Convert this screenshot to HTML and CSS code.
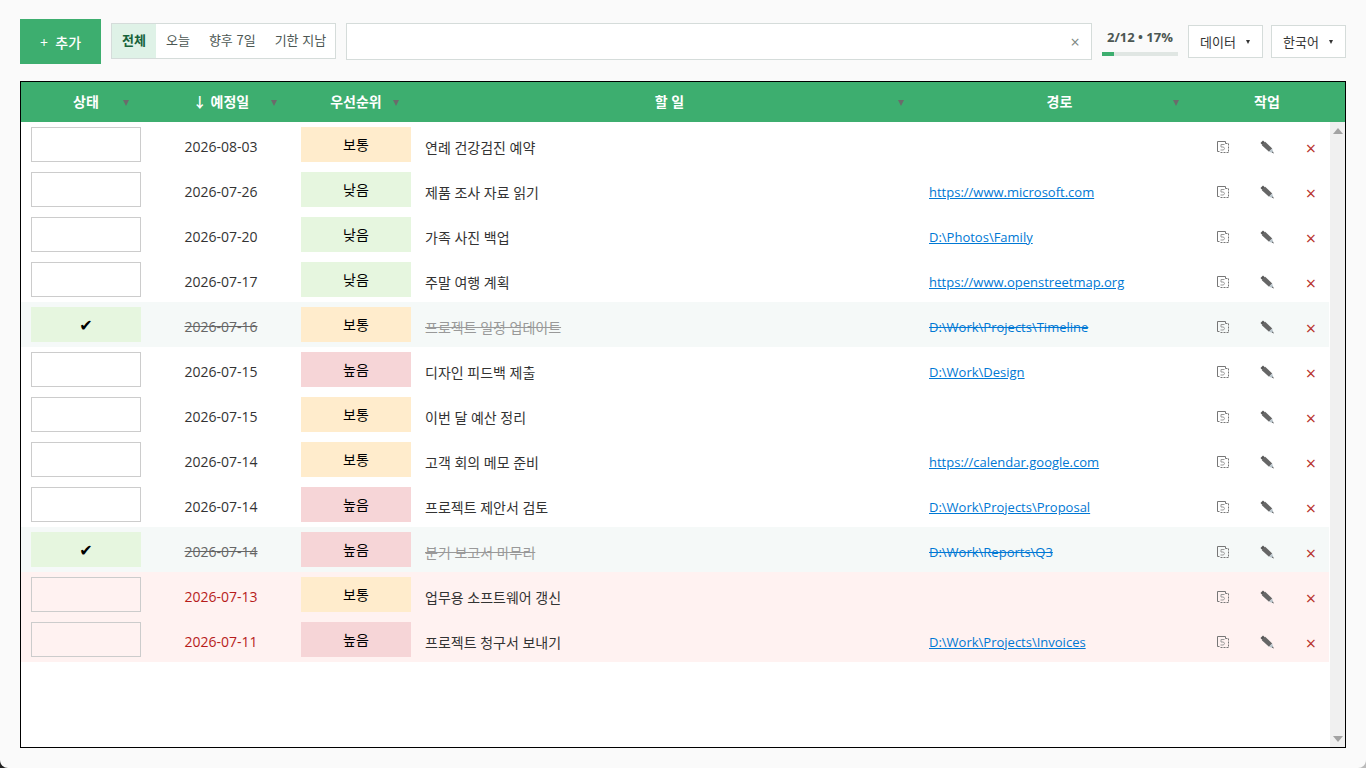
FILE: index.html
```html
<!DOCTYPE html>
<html lang="ko">
<head>
    <meta charset="UTF-8">
    <meta name="viewport" content="width=device-width, initial-scale=1.0">
    <title>할 일</title>
    <link rel="stylesheet" href="styles.css">
</head>
<body>
    <div class="app">
        <header class="toolbar">
            <button class="btn-add" type="button">+&nbsp; 추가</button>

            <div class="filters">
                <button class="filter active" type="button">전체</button>
                <button class="filter" type="button">오늘</button>
                <button class="filter" type="button">향후 7일</button>
                <button class="filter" type="button">기한 지남</button>
            </div>

            <div class="search">
                <input type="text" id="search" aria-label="검색">
                <button class="search-clear" type="button" aria-label="지우기">×</button>
            </div>

            <div class="progress">
                <div class="progress-text">2/12 • 17%</div>
                <div class="progress-track"><div class="progress-fill" style="width: 16%"></div></div>
            </div>

            <div class="menus">
                <button class="menu" type="button">데이터 <span class="caret"></span></button>
                <label class="menu">
                    <select id="language" aria-label="언어">
                        <option>한국어</option>
                    </select>
                    <span class="caret"></span>
                </label>
            </div>
        </header>

        <main class="frame">
            <table class="tasks">
                <thead>
                    <tr>
                        <th>상태<button class="th-filter" type="button" aria-label="상태 필터"></button></th>
                        <th class="th-date">↓ 예정일<button class="th-filter" type="button" aria-label="예정일 필터"></button></th>
                        <th>우선순위<button class="th-filter" type="button" aria-label="우선순위 필터"></button></th>
                        <th class="th-task">할 일<button class="th-filter" type="button" aria-label="할 일 필터"></button></th>
                        <th>경로<button class="th-filter" type="button" aria-label="경로 필터"></button></th>
                        <th class="th-actions">작업</th>
                    </tr>
                </thead>
                <tbody id="taskRows"></tbody>
            </table>
            <div class="scrollbar">
                <span class="scroll-up"></span>
                <span class="scroll-down"></span>
            </div>
        </main>
    </div>

    <script src="app.js"></script>
</body>
</html>
```
FILE: styles.css
```css
* {
    margin: 0;
    padding: 0;
    box-sizing: border-box;
}

html {
    background: linear-gradient(90deg, #222222, #bbbbbb);
}

body,
button,
input,
select {
    font-family: 'Open Sans', 'Noto Sans CJK KR', sans-serif;
    font-size: 14px;
    color: #333333;
}

button {
    border: none;
    background: none;
    cursor: pointer;
}

.app {
    display: flex;
    flex-direction: column;
    gap: 17px;
    min-height: 100vh;
    padding: 19px 20px 20px;
    background: #fafafa;
    border-radius: 0 0 8px 8px;
}

/* Toolbar */
.toolbar {
    display: flex;
    align-items: center;
    gap: 10px;
    height: 45px;
}

.btn-add {
    height: 45px;
    padding: 0 20px;
    background: #3dae6f;
    color: #ffffff;
    font-weight: 500;
}

.filters {
    display: flex;
    height: 36px;
    margin-bottom: 1px;
    border: 1px solid #d5dcda;
    background: #ffffff;
}

.filter {
    padding: 0 9px 3px 10px;
    font-family: 'Noto Sans CJK KR', sans-serif;
    font-size: 13px;
    color: #4c5753;
}

.filter.active {
    padding-right: 10px;
    background: #dff2e7;
    color: #17633b;
    font-weight: 700;
}

.search {
    display: flex;
    flex: 1;
    height: 37px;
    border: 1px solid #d5dcda;
    background: #ffffff;
}

.search input {
    flex: 1;
    min-width: 0;
    padding: 0 10px;
    border: none;
    outline: none;
    background: none;
}

.search-clear {
    width: 32px;
    font-size: 16px;
    color: #7d8682;
}

.progress {
    width: 76px;
}

.progress-text {
    font-size: 13px;
    line-height: 18px;
    font-weight: 700;
    text-align: center;
    white-space: nowrap;
    color: #4c5753;
}

.progress-track {
    height: 4px;
    margin-top: 6px;
    background: #e0e6e3;
}

.progress-fill {
    height: 4px;
    background: #3dae6f;
}

.menus {
    display: flex;
    gap: 8px;
}

.menu {
    display: flex;
    align-items: center;
    justify-content: space-between;
    width: 75px;
    height: 33px;
    padding: 0 12px 0 11px;
    border: 1px solid #d5dcda;
    background: #ffffff;
    font-size: 13px;
}

.menu select {
    appearance: none;
    border: none;
    background: none;
    font-size: 13px;
}

.caret {
    border: 2px solid transparent;
    border-top: 4px solid #333333;
    border-bottom: none;
}

/* Task table */
.frame {
    position: relative;
    flex: 1;
    border: 1px solid #000000;
    background: #ffffff;
}

.tasks,
.tasks thead,
.tasks tbody {
    display: block;
}

.tasks tr {
    display: grid;
    grid-template-columns: 130px 140px 130px 497fr 283fr 128px;
    align-items: center;
    height: 45px;
    margin-right: 16px;
}

.tasks thead tr {
    height: 40px;
    margin-right: 0;
    padding-right: 16px;
    background: #3dae6f;
}

.tasks th {
    position: relative;
    line-height: 40px;
    font-weight: 700;
    color: #ffffff;
}

.th-filter {
    position: absolute;
    top: 18px;
    right: 22px;
    border: 3px solid transparent;
    border-top: 6px solid #6b6b6b;
    border-bottom: none;
}

.th-date .th-filter,
.th-task .th-filter {
    right: 14px;
}

.tasks .th-actions {
    padding-left: 4px;
}

.status,
.priority {
    display: block;
    appearance: none;
    width: 110px;
    height: 35px;
    margin: 0 auto;
    border: 1px solid #cccccc;
    text-align: center;
    line-height: 35px;
    color: #000000;
}

.status:checked {
    border: none;
    background: #e6f6df;
}

.status:checked::before {
    content: '✔';
    font-family: 'DejaVu Sans', sans-serif;
    font-size: 16px;
    line-height: 38px;
}

.priority {
    border: none;
    border-radius: 0;
    text-align-last: center;
}

.priority.high { background: #f6d5d7; }
.priority.medium { background: #ffeccc; }
.priority.low { background: #e6f6df; }

.date,
.task,
.path,
.actions {
    padding-top: 4px;
}

.date {
    text-align: center;
}

.task {
    padding-left: 4px;
}

.path {
    padding-left: 11px;
    font-size: 13px;
}

.path a {
    color: #0078d4;
}

.actions {
    display: flex;
    gap: 12px;
    padding-left: 6px;
}

.actions button {
    width: 32px;
    height: 32px;
    line-height: 32px;
}

.actions svg {
    display: block;
    margin: 0 auto;
}

.actions .delete {
    padding-top: 1px;
    font-size: 18px;
    color: #b8322a;
}

.done {
    background: #f5f9f8;
}

.done .date {
    color: #666666;
    text-decoration: line-through;
}

.done .task {
    color: #999999;
    text-decoration: line-through;
}

.done .path a {
    text-decoration: line-through;
}

.overdue {
    background: #fff2f1;
}

.overdue .date {
    color: #b71c1c;
}

/* Scrollbar */
.scrollbar {
    position: absolute;
    top: 40px;
    right: 0;
    bottom: 0;
    display: flex;
    flex-direction: column;
    justify-content: space-between;
    align-items: center;
    width: 15px;
    padding: 6px 0 5px;
    background: #f0f0f0;
}

.scroll-up,
.scroll-down {
    border: 5px solid transparent;
}

.scroll-up {
    border-top: none;
    border-bottom: 6px solid #a3a3a3;
}

.scroll-down {
    border-top: 6px solid #a3a3a3;
    border-bottom: none;
}
```
FILE: app.js
```js
const tasks = [
    { date: '2026-08-03', priority: 'medium', text: '연례 건강검진 예약' },
    { date: '2026-07-26', priority: 'low', text: '제품 조사 자료 읽기', path: 'https://www.microsoft.com' },
    { date: '2026-07-20', priority: 'low', text: '가족 사진 백업', path: 'D:\\Photos\\Family' },
    { date: '2026-07-17', priority: 'low', text: '주말 여행 계획', path: 'https://www.openstreetmap.org' },
    { date: '2026-07-16', priority: 'medium', text: '프로젝트 일정 업데이트', path: 'D:\\Work\\Projects\\Timeline', state: 'done' },
    { date: '2026-07-15', priority: 'high', text: '디자인 피드백 제출', path: 'D:\\Work\\Design' },
    { date: '2026-07-15', priority: 'medium', text: '이번 달 예산 정리' },
    { date: '2026-07-14', priority: 'medium', text: '고객 회의 메모 준비', path: 'https://calendar.google.com' },
    { date: '2026-07-14', priority: 'high', text: '프로젝트 제안서 검토', path: 'D:\\Work\\Projects\\Proposal' },
    { date: '2026-07-14', priority: 'high', text: '분기 보고서 마무리', path: 'D:\\Work\\Reports\\Q3', state: 'done' },
    { date: '2026-07-13', priority: 'medium', text: '업무용 소프트웨어 갱신', state: 'overdue' },
    { date: '2026-07-11', priority: 'high', text: '프로젝트 청구서 보내기', path: 'D:\\Work\\Projects\\Invoices', state: 'overdue' }
];

const priorities = { high: '높음', medium: '보통', low: '낮음' };

const copyIcon = `<svg width="12" height="12" viewBox="0 0 12 12" fill="none" stroke="#777">
    <path d="M2.5 10.5h-2v-10h8v2"/>
    <path d="M3.500 11.500h8v-9h-3" stroke-dasharray="2 1"/>
    <path d="M7.500 3.500H4v2.500h2.500q2 1.500 0 3H3.500" stroke="#999"/>
</svg>`;

const editIcon = `<svg width="14" height="14" viewBox="0 0 14 14">
    <path d="M.5 3L3 .5 5 2.400 2.400 5z" fill="#555"/>
    <path d="M1.800 5.200L5.200 1.800 12.200 8.400 9 11.800z" fill="#666"/>
    <path d="M9 11.800L12.200 8.400l1.200 4.800z" fill="#b9c5cc"/>
    <path d="M12 12.200l1-.8.8 2.400z" fill="#444"/>
</svg>`;

function options(current) {
    return Object.keys(priorities)
        .map(key => `<option value="${key}"${key === current ? ' selected' : ''}>${priorities[key]}</option>`)
        .join('');
}

// Render one table row per task
document.getElementById('taskRows').innerHTML = tasks.map(task => `
    <tr class="${task.state || ''}">
        <td><input class="status" type="checkbox" aria-label="${task.text}"${task.state === 'done' ? ' checked' : ''}></td>
        <td class="date">${task.date}</td>
        <td><select class="priority ${task.priority}" aria-label="우선순위">${options(task.priority)}</select></td>
        <td class="task">${task.text}</td>
        <td class="path">${task.path ? `<a href="#">${task.path}</a>` : ''}</td>
        <td class="actions">
            <button type="button" aria-label="복사">${copyIcon}</button>
            <button type="button" aria-label="편집">${editIcon}</button>
            <button class="delete" type="button" aria-label="삭제">×</button>
        </td>
    </tr>`).join('');
```
